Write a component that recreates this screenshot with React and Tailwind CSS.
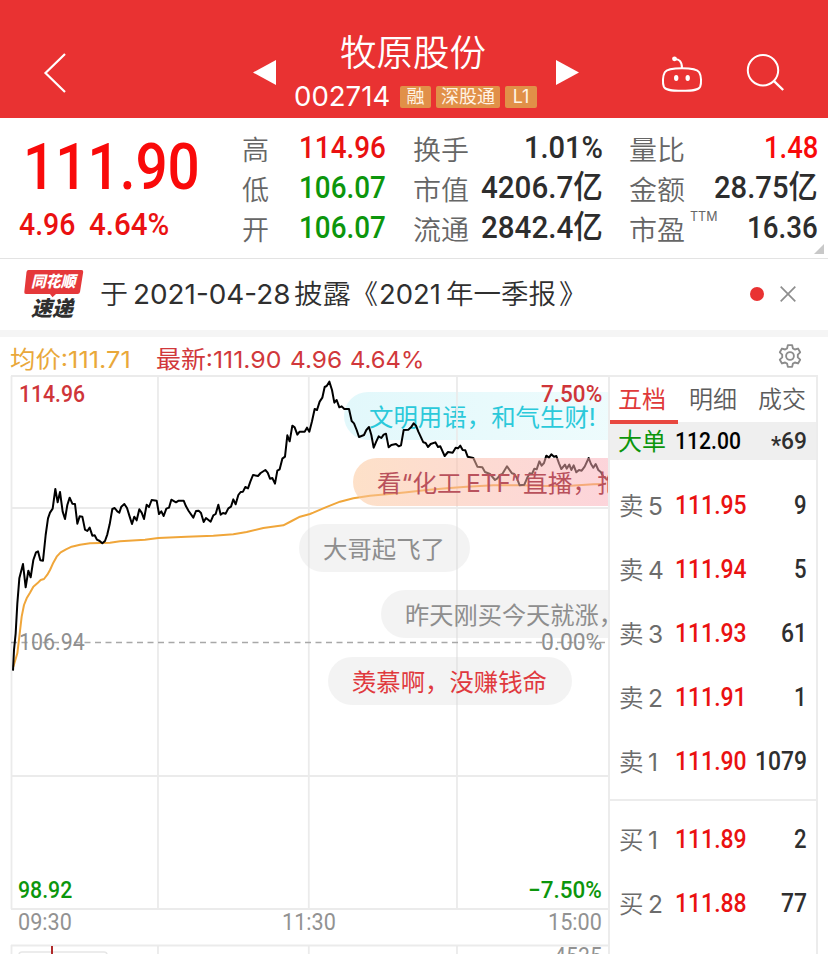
import { useLayoutEffect, useRef } from "react";

const CJK = "font-['Inter','Noto_Sans_CJK_SC',sans-serif]";
const DIN = "font-['Roboto','Noto_Sans_CJK_SC',sans-serif]";

// Condenses or widens a line of text so that it fills its box.
function Fit({ children, className = "" }) {
  const box = useRef(null);
  const inner = useRef(null);
  useLayoutEffect(() => {
    const w = inner.current.offsetWidth;
    if (w) inner.current.style.transform = `scaleX(${box.current.clientWidth / w})`;
  }, [children]);
  return (
    <span ref={box} className={`block shrink-0 whitespace-nowrap ${className}`}>
      <span ref={inner} className="inline-block origin-left whitespace-pre">{children}</span>
    </span>
  );
}

function Header() {
  return (
    <header className="flex h-[118px] bg-[#e93232] text-white">
      <svg className="ml-[42px] mt-[52px] h-[42px] w-[26px] shrink-0" viewBox="0 0 26 42" fill="none" stroke="currentColor" strokeWidth="2.2">
        <path d="M23 2 3.500 21 23 40" />
      </svg>
      <svg className="ml-[185px] mt-[60px] h-[25px] w-[23px] shrink-0" viewBox="0 0 23 25" fill="currentColor">
        <path d="M0 12.500 23 0v25z" />
      </svg>
      <div className="ml-[18px] w-[243px] shrink-0 pt-[32px]">
        <Fit className="ml-[46px] w-[146px] text-[36px] font-[350] leading-[42px]">牧原股份</Fit>
        <div className="mt-[9px] flex items-center">
          <Fit className="w-[96px] text-[27px] leading-[28px]">002714</Fit>
          <div className="ml-[10px] flex gap-[5px] text-[18px] leading-[22px] text-[#fff4e6]">
            <span className="flex h-[22px] w-[31px] justify-center rounded-[2px] bg-[#e19048]">融</span>
            <span className="flex h-[22px] w-[64px] justify-center rounded-[2px] bg-[#e19048]">深股通</span>
            <span className="flex h-[22px] w-[32px] justify-center rounded-[2px] bg-[#e19048]">L1</span>
          </div>
        </div>
      </div>
      <svg className="ml-[19px] mt-[60px] h-[25px] w-[23px] shrink-0" viewBox="0 0 23 25" fill="currentColor">
        <path d="M23 12.500 0 0v25z" />
      </svg>
      <svg className="ml-[81px] mt-[54px] h-[40px] w-[44px] shrink-0" viewBox="660 54 44 40" fill="none" stroke="currentColor" strokeWidth="2">
        <path d="M682 68.200c-11 0-15.500 1.300-17.200 4-2.200 3.600-2.300 11-1 14.500 1.300 3.200 6 4.100 18.200 4.100s16.900-.9 18.200-4.100c1.300-3.500 1.200-10.900-1-14.500-1.700-2.700-6.200-4-17.200-4z" />
        <path d="M674.700 59.200c4-.4 7.300 2 7.300 9" />
        <circle cx="674.500" cy="58.800" r="2.400" fill="currentColor" stroke="none" />
        <ellipse cx="676.200" cy="78" rx="2.200" ry="2.900" fill="currentColor" stroke="none" />
        <ellipse cx="687.700" cy="78" rx="2.200" ry="2.900" fill="currentColor" stroke="none" />
      </svg>
      <svg className="ml-[41px] mt-[52px] h-[42px] w-[42px] shrink-0" viewBox="745 52 42 42" fill="none" stroke="currentColor" strokeWidth="2">
        <circle cx="763" cy="70.200" r="15.200" />
        <path d="m773.500 80.700 9.700 9.300" strokeWidth="2.400" />
      </svg>
    </header>
  );
}

function Stat({ label, labelW, value, valueW, color, sup }) {
  return (
    <div className="flex h-[40px] items-center justify-between">
      <span className="relative">
        <Fit className={`${labelW} ${CJK} pt-px text-[27px] font-[350] leading-[40px] text-[#666]`}>{label}</Fit>
        {sup && <span className="absolute left-[61px] top-[-3px] text-[12.5px] leading-[20px] text-[#666]">{sup}</span>}
      </span>
      <Fit className={`${valueW} ${DIN} ${color} mb-[7px] mr-px text-[32px] font-medium leading-[40px]`}>{value}</Fit>
    </div>
  );
}

function Quote() {
  return (
    <section className="relative flex h-[141px] border-b border-[#e3e3e3] bg-white">
      <div className={`w-[242px] shrink-0 text-[#f90a0a] ${DIN}`}>
        <Fit className="ml-[23px] mt-[9px] w-[177px] text-[65px] font-medium leading-[80px]">111.90</Fit>
        <div className="flex pl-[19px] text-[31px] font-medium leading-[36px] text-[#ea1111]">
          <Fit className="w-[56px]">4.96</Fit>
          <Fit className="ml-[14px] w-[80px]">4.64%</Fit>
        </div>
      </div>
      <div className="w-[145px] shrink-0 pt-[12px]">
        <Stat label="高" labelW="w-[27px]" value="114.96" valueW="w-[87px]" color="text-[#ea1111]" />
        <Stat label="低" labelW="w-[27px]" value="106.07" valueW="w-[87px]" color="text-[#0c960c]" />
        <Stat label="开" labelW="w-[27px]" value="106.07" valueW="w-[87px]" color="text-[#0c960c]" />
      </div>
      <div className="ml-[26px] w-[191px] shrink-0 pt-[12px]">
        <Stat label="换手" labelW="w-[56px]" value="1.01%" valueW="w-[79px]" color="text-[#2d2d2d]" />
        <Stat label="市值" labelW="w-[56px]" value="4206.7亿" valueW="w-[122px]" color="text-[#2d2d2d]" />
        <Stat label="流通" labelW="w-[56px]" value="2842.4亿" valueW="w-[122px]" color="text-[#2d2d2d]" />
      </div>
      <div className="ml-[25px] w-[190px] shrink-0 pt-[12px]">
        <Stat label="量比" labelW="w-[56px]" value="1.48" valueW="w-[54px]" color="text-[#f90a0a]" />
        <Stat label="金额" labelW="w-[56px]" value="28.75亿" valueW="w-[104px]" color="text-[#2d2d2d]" />
        <Stat label="市盈" labelW="w-[56px]" value="16.36" valueW="w-[71px]" color="text-[#2d2d2d]" sup="TTM" />
      </div>
      <svg className="absolute bottom-[4px] right-[4px] size-[10px]" viewBox="0 0 10 10" fill="#c8c8c8">
        <path d="M10 0v10H0z" />
      </svg>
    </section>
  );
}

function Notice() {
  return (
    <section className="flex h-[78px] border-b-[7px] border-[#f5f5f5] bg-white text-[#2f2f2f]">
      <div className="relative ml-[24px] mt-[11px] w-[60px] shrink-0">
        <svg className="absolute left-0 top-0 h-[28px] w-[60px]" viewBox="0 0 60 28" fill="#e5383a">
          <path d="M4.500 0H57.500q2 0 1.700 2L56 22q-.4 2-2.500 2H32l-3.500 3.200L26 24H2Q0 24 .3 22L2.500 2Q2.800 0 4.500 0z" />
        </svg>
        <Fit className="relative ml-[7px] w-[45px] text-[15.5px] font-black italic leading-[23px] text-white">同花顺</Fit>
        <Fit className="relative ml-[7px] mt-[4px] w-[42px] text-[21px] font-black italic leading-[23px]">速递</Fit>
      </div>
      <div className="ml-[16px] mt-[16px] flex text-[27px] font-[350] leading-[40px]">
        <Fit className="w-[28px]">于</Fit>
        <Fit className="ml-[5px] w-[158px] font-normal">2021-04-28</Fit>
        <Fit className="ml-[3px] w-[57px]">披露</Fit>
        <Fit className="w-[27px]">《</Fit>
        <Fit className="ml-[1px] w-[62px] font-normal">2021</Fit>
        <Fit className="ml-[5px] w-[110px]">年一季报</Fit>
        <Fit className="ml-[3px] w-[28px]">》</Fit>
      </div>
      <span className="ml-[163px] mt-[28px] size-[14px] shrink-0 rounded-full bg-[#e93232]" />
      <svg className="ml-[16px] mt-[27px] size-[16px] shrink-0" viewBox="0 0 16 16" stroke="#8e8e8e" strokeWidth="1.700">
        <path d="m.7.7 14.600 14.600M15.300.7.7 15.300" />
      </svg>
    </section>
  );
}

const PRICE =
  "39,992 42,930 47,880 52,790 58,715 69,672 77,742 85,692 92,712 100,660 108,637 114,634 121,661 129,662 137,585 144,535 150,518 158,506 166,447 173,487 180,456 188,515 195,537 202,495 209,473 217,491 225,492 232,551 239,529 247,530 255,569 262,573 269,563 277,587 284,586 291,599 299,603 307,610 315,603 322,583 329,553 337,507 344,504 352,514 358,518 364,500 373,492 381,504 389,530 396,552 403,530 410,541 418,508 425,518 432,537 440,494 447,501 455,480 470,482 477,522 484,514 491,528 499,506 507,503 514,479 528,487 536,482 551,482 558,499 566,513 580,533 588,513 596,512 603,519 611,546 618,534 632,545 640,526 647,522 655,494 662,524 669,519 677,521 685,505 693,500 700,478 707,493 715,465 722,456 729,455 736,441 744,445 751,425 759,405 774,408 782,399 796,390 803,398 810,416 817,414 825,431 832,392 839,388 847,356 855,350 862,286 869,304 877,257 884,262 892,284 899,275 914,275 921,263 928,275 936,244 944,207 951,210 959,185 967,173 974,141 980,138 988,125 996,150 1003,188 1010,180 1018,202 1025,199 1033,207 1047,207 1055,243 1062,250 1070,270 1077,291 1092,285 1099,270 1107,261 1114,285 1121,323 1129,304 1136,289 1144,294 1151,284 1158,281 1166,322 1174,315 1188,312 1196,319 1203,316 1211,270 1225,269 1233,262 1241,250 1248,257 1255,275 1262,290 1270,307 1277,309 1284,321 1292,312 1306,307 1314,321 1321,319 1334,348 1344,336 1358,338 1367,323 1374,325 1381,317 1388,330 1396,331 1403,350 1420,354 1432,380 1447,382 1455,396 1470,402 1485,420 1492,415 1500,405 1507,402 1521,379 1536,400 1543,402 1551,415 1559,436 1573,434 1581,415 1589,400 1596,402 1603,386 1610,388 1618,364 1625,377 1632,369 1639,347 1647,353 1654,343 1662,350 1669,348 1677,370 1684,387 1695,374 1700,386 1708,374 1714,390 1721,376 1729,397 1737,390 1745,392 1754,380 1766,354 1773,372 1780,383 1787,372 1795,390 1803,397 1810,410 1818,415";
const AVERAGE =
  "40,980 52,940 58,890 65,830 72,795 80,775 90,758 100,740 112,730 122,720 132,717 142,704 150,690 160,668 170,650 182,637 198,628 215,620 240,614 270,610 330,608 360,604 435,599 475,594 560,590 640,587 700,583 740,576 790,564 850,556 875,543 900,530 930,522 940,518 975,503 1020,485 1060,475 1110,467 1160,463 1220,457 1280,450 1340,445 1400,440 1480,436 1560,436 1640,438 1700,438 1780,433 1818,432";

function Chart() {
  return (
    <div className={`relative h-[579px] w-[608px] shrink-0 overflow-hidden ${DIN} text-[24px] leading-[28px]`}>
      <div className={`${CJK} leading-[51px]`}>
        <div className="absolute left-[344px] top-[17px] h-[48px] w-[290px] rounded-full bg-linear-to-r from-[#e2f8fb] to-[#effcfd] pl-[25px] text-[#2bc9da]">
          <Fit className="w-[227px]">文明用语，和气生财!</Fit>
        </div>
      </div>
      <svg className="absolute left-0 top-0 h-[579px] w-[609px]" viewBox="0 375 609 579" fill="none">
        <path d="M11 376H609M11 508H609M11 776H609M11 909H609M11 945.500H609M11.500 376V909M158 376V909M308.800 376V909M457 376V909M11.500 945V960M158 945V960M308.800 945V960M457 945V960" stroke="#ebebeb" strokeWidth="1.800" />
        <rect x="19" y="952" width="88" height="20" rx="3" stroke="#e6e6e6" strokeWidth="1.500" />
        <path d="M52 946V960" stroke="#b02a2a" strokeWidth="2" />
        <path d="M11 642.500H605" stroke="#a8a8a8" strokeWidth="1.300" strokeDasharray="6 4.500" />
        <g transform="translate(0 340) scale(.333333)" strokeLinejoin="round">
          <polyline points={AVERAGE} stroke="#f0a63a" strokeWidth="6" />
          <polyline points={PRICE} stroke="#000" strokeWidth="6" />
        </g>
      </svg>

      <div className={`${CJK} leading-[51px]`}>
        <div className="absolute left-[353px] top-[83px] h-[48px] w-[320px] rounded-full bg-linear-to-r from-[#fcc89c]/55 to-[#f9a3be]/50 pl-[24px] text-[#b9515c]">
          <div className="flex">
            <Fit className="w-[85px]">看“化工</Fit>
            <Fit className="ml-[4px] w-[45px]">ETF</Fit>
            <Fit className="w-[10px]">”</Fit>
            <Fit className="ml-[2px] w-[99px]">直播，抱</Fit>
          </div>
        </div>
        <div className="absolute left-[299px] top-[149px] h-[48px] w-[171px] rounded-full bg-[#dcdcdc]/35 pl-[24px] text-[#8e8e8e]">
          <Fit className="w-[122px]">大哥起飞了</Fit>
        </div>
        <div className="absolute left-[381px] top-[215px] h-[48px] w-[290px] rounded-full bg-[#dcdcdc]/35 pl-[24px] text-[#8e8e8e]">
          <Fit className="w-[218px]">昨天刚买今天就涨，</Fit>
        </div>
        <div className="absolute left-[328px] top-[282px] h-[48px] w-[244px] rounded-full bg-[#dcdcdc]/35 pl-[24px] text-[#e0393e]">
          <Fit className="w-[195px]">羡慕啊，没赚钱命</Fit>
        </div>
      </div>

      <Fit className="absolute left-[19px] top-[5px] w-[66px] font-medium text-[#cf3539]">114.96</Fit>
      <Fit className="absolute left-[541px] top-[5px] w-[61px] font-medium text-[#cf3539]">7.50%</Fit>
      <Fit className="absolute left-[19px] top-[253px] w-[66px] text-[#8f8f8f]">106.94</Fit>
      <Fit className="absolute left-[541px] top-[253px] w-[61px] text-[#8f8f8f]">0.00%</Fit>
      <Fit className="absolute left-[18px] top-[501px] w-[54px] font-medium text-[#0c960c]">98.92</Fit>
      <Fit className="absolute left-[528px] top-[501px] w-[74px] font-medium text-[#0c960c]">−7.50%</Fit>
      <Fit className="absolute left-[18px] top-[533px] w-[54px] text-[#929292]">09:30</Fit>
      <Fit className="absolute left-[282px] top-[533px] w-[54px] text-[#929292]">11:30</Fit>
      <Fit className="absolute left-[548px] top-[533px] w-[54px] text-[#929292]">15:00</Fit>
      <Fit className="absolute left-[554px] top-[567px] w-[48px] text-[#929292]">4535</Fit>
    </div>
  );
}

function Level({ name, price, vol, volW }) {
  return (
    <div className="flex h-[64px] items-center">
      <div className={`flex w-[56px] pt-[2px] text-[24.5px] leading-[30px] text-[#6c6c6c] ${CJK}`}>
        <span className="w-[29px] font-[350]">{name[0]}</span>
        <span>{name[1]}</span>
      </div>
      <Fit className={`w-[72px] ${DIN} text-[25.5px] font-medium leading-[30px] text-[#ea1111]`}>{price}</Fit>
      <Fit className={`ml-auto ${volW} ${DIN} text-[25.5px] font-medium leading-[30px] text-[#2f2f2f]`}>{vol}</Fit>
    </div>
  );
}

function OrderBook() {
  return (
    <aside className={`h-[579px] w-[210px] shrink-0 border-x-2 border-t-2 border-[#ececec] bg-white ${CJK}`}>
      <div className="flex h-[45px] text-[24px] font-[350] leading-[46px] text-[#5c5c5c]">
        <span className="h-[47px] w-[68px] border-b-4 border-[#e8473f] pl-[8px] font-normal text-[#e03a3a]">五档</span>
        <span className="pl-[11px]">明细</span>
        <span className="pl-[21px]">成交</span>
      </div>
      <div className="flex h-[38px] items-center bg-[#efefef] pl-[8px] pr-[9px]">
        <span className="w-[57px] pt-[2px] text-[24px] leading-[30px] text-[#0c960c]">大单</span>
        <Fit className={`w-[66px] ${DIN} text-[24px] font-medium leading-[30px] text-black`}>112.00</Fit>
        <Fit className={`ml-auto w-[36px] ${DIN} text-[24px] font-medium leading-[30px] text-[#2f2f2f]`}>
          <span className="relative top-[4px]">*</span>69
        </Fit>
      </div>
      <div className="h-[341px] border-b-2 border-[#ececec] pl-[9px] pr-[9px] pt-[13px]">
        <Level name="卖5" price="111.95" vol="9" volW="w-[13px]" />
        <Level name="卖4" price="111.94" vol="5" volW="w-[13px]" />
        <Level name="卖3" price="111.93" vol="61" volW="w-[26px]" />
        <Level name="卖2" price="111.91" vol="1" volW="w-[13px]" />
        <Level name="卖1" price="111.90" vol="1079" volW="w-[52px]" />
      </div>
      <div className="pl-[9px] pr-[9px] pt-[6px]">
        <Level name="买1" price="111.89" vol="2" volW="w-[13px]" />
        <Level name="买2" price="111.88" vol="77" volW="w-[26px]" />
      </div>
    </aside>
  );
}

export default function App() {
  return (
    <main className={`h-[954px] w-[828px] overflow-hidden bg-white ${CJK}`}>
      <Header />
      <Quote />
      <Notice />
      <div className="flex h-[38px] pl-[10px] pt-[5px] text-[23.5px] leading-[36px]">
        <Fit className="w-[121px] text-[#e9a83a]">均价:111.71</Fit>
        <Fit className="ml-[25px] w-[125px] text-[#d1383b]">最新:111.90</Fit>
        <Fit className="ml-[9px] w-[52px] text-[#d1383b]">4.96</Fit>
        <Fit className="ml-[8px] w-[74px] text-[#d1383b]">4.64%</Fit>
        <svg className="ml-[353px] mt-[1px] size-[26px]" viewBox="0 0 24 24" fill="none" stroke="#8c8c8c" strokeWidth="1.700" strokeLinejoin="round">
          <path d="M10 2h4l.7 3 1.800 1 2.900-.9 2 3.500-2.200 2.100v2.600l2.200 2.100-2 3.500-2.900-.9-1.800 1-.7 3h-4l-.7-3-1.800-1-2.900.9-2-3.500 2.200-2.100v-2.600L2.600 8.600l2-3.500 2.900.9 1.800-1z" />
          <circle cx="12" cy="12" r="3.600" />
        </svg>
      </div>
      <div className="flex">
        <Chart />
        <OrderBook />
      </div>
    </main>
  );
}
